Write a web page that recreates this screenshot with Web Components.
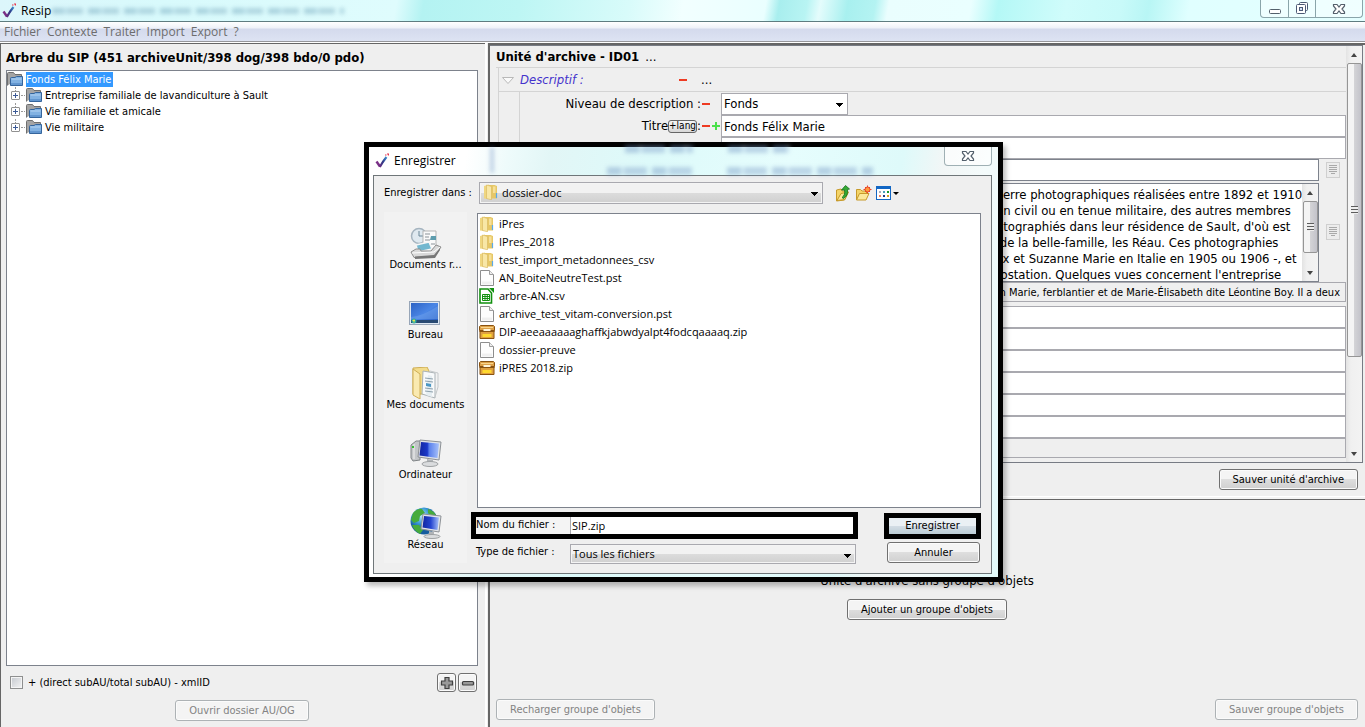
<!DOCTYPE html>
<html lang="fr">
<head>
<meta charset="utf-8">
<title>Resip</title>
<style>
html, body { margin: 0; height: 100%; }
body {
  --ui: "DejaVu Sans Condensed", "DejaVu Sans", sans-serif;
  --sys: "Open Sans", "Noto Sans", sans-serif;
  --face: #efefef;
  --line: #a9a9af;
  --edge: #7d828c;
  font: 11px/16px var(--ui);
  color: #000;
  background: var(--face);
  overflow: hidden;
}
</style>
</head>
<body>
<resip-app></resip-app>

<script>
const RESET = `
*, *::before, *::after { box-sizing: border-box; }
:host { display: block; box-sizing: border-box; }
:host([hidden]) { display: none; }
button, input, select, textarea { font: inherit; color: inherit; margin: 0; border-radius: 0; outline: none; }
svg { display: block; flex: none; }
`;
function define(name, css, html, setup) {
  const template = document.createElement('template');
  template.innerHTML = `<style>${RESET}${css}</style>${html}`;
  customElements.define(name, class extends HTMLElement {
    constructor() {
      super();
      this.attachShadow({ mode: 'open' }).append(template.content.cloneNode(true));
    }
    connectedCallback() { if (setup) setup(this, this.shadowRoot); }
  });
}

/* ---------- icons ---------- */
const ICONS = {
  logo: [14, 16, `<defs><linearGradient id="g" x1="0" y1="1" x2="1" y2="0"><stop offset="0" stop-color="#6a2a80"/><stop offset=".5" stop-color="#2f3a88"/><stop offset="1" stop-color="#3d8fd0"/></linearGradient></defs><path d="M1.500 8.500L5 13.500" fill="none" stroke="#7a2f86" stroke-width="2.400"/><path d="M4.800 14Q7.500 9 11.500 4" fill="none" stroke="url(#g)" stroke-width="2.200"/><path d="M10 2H11.500M12 1H13.500V2.500" fill="none" stroke="#e8344c" stroke-width="1.200"/>`],
  folder: [17, 16, `<path d="M.5 14.500V2.500Q.5 1.500 1.500 1.500H6.500L8 3.500H14.500V6" fill="#a4a4a4" stroke="#6f6f6f"/><path d="M3.500 14.500V7.500Q3.500 6.500 4.500 6.500H8L9.500 5.500H15.500V14.500Z" fill="#82b2e2" stroke="#35659c"/><path d="M4.500 8H14.500" stroke="#b5d4f2"/><path d="M4 13H15" stroke="#6296cf" stroke-width="2"/>`],
  yfolder: [14, 16, `<path d="M0 2L5 .5V15L0 14.500Z" fill="#efd680"/><path d="M5 1H10.500L13 2V14.500H5Z" fill="#e6c766"/><path d="M2.500 1L7.500 2.500V15.800L2.500 14.500Z" fill="#f8e7a6" stroke="#d6b65c" stroke-width=".6"/><path d="M9 2.500H11.500V9H9Z" fill="#f6e09a"/><path d="M12.500 9V14" stroke="#5aa9e8" stroke-width="1.200"/>`],
  page: [14, 16, `<path d="M.5 .5H9.500L13.500 4.500V15.500H.5Z" fill="#fdfdfd" stroke="#8d8d8d"/><path d="M9.500 .5V4.500H13.500" fill="#eee" stroke="#9d9d9d"/><path d="M2 13H12" stroke="#f0f0f0" stroke-width="3"/>`],
  csv: [15, 16, `<path d="M1 1H9L12.500 5V15H1Z" fill="#fff" stroke="#12900f" stroke-width="1.600"/><path d="M10 0H15V5Z" fill="#12900f"/><path d="M3.500 6.500H10.500V12.500H3.500ZM3.500 8.500H10.500M3.500 10.500H10.500M6 6.500V12.500M8.300 6.500V12.500" fill="none" stroke="#12900f"/>`],
  zip: [16, 16, `<path d="M1.500 1.500H14.500L15.500 2.500V6.500H.5V2.500Z" fill="#dda048" stroke="#8a5210"/><path d="M1 6.500H15V14.500H1Z" fill="#dfa040" stroke="#8a5210"/><path d="M2 3.500H14" stroke="#f8d58b"/><path d="M.5 7.500H15.500" stroke="#8a5210"/><rect x="3.500" y="10" width="9" height="3" fill="#ffd92e"/><rect x="4.500" y="5" width="7" height="2" fill="#fff5d8"/>`],
  up: [16, 18, `<path d="M1.500 6L6 5L7 7H12L9.500 16L1.500 17Z" fill="#f4d468" stroke="#c79a2a"/><path d="M2 16.500L6 9.500L13.500 8L10 15.500Z" fill="#fbe89a" stroke="#c79a2a"/><path d="M7 13.500Q10.500 11 9.500 6H6.500L10.500 1.500L14.500 5L12.500 5.500Q13.500 11.500 8.500 14.500Z" fill="#35a935" stroke="#14701a" stroke-width=".8"/>`],
  newfolder: [17, 18, `<path d="M1.500 16V5.500H5.500L7 7H11.500V9" fill="#f4d468" stroke="#c79a2a"/><path d="M1.500 16L4.500 9.500H14L11 16Z" fill="#fbe89a" stroke="#c79a2a"/><circle cx="12.500" cy="5.500" r="2.500" fill="#ff9a3a" stroke="#e8432a"/><path d="M12.500 1.500V3M12.500 8V9.500M8.500 5.500H10M15 5.500H16.500M10 3L11 4M15 3L14 4M10 8L11 7M15 8L14 7" stroke="#e8432a"/>`],
  grid: [24, 16, `<rect x=".5" y="1.500" width="14" height="13" fill="#fff" stroke="#1266c4"/><path d="M1 2.500H14" stroke="#1266c4" stroke-width="3"/><g><rect x="3" y="6" width="2" height="2" fill="#a8b0bc"/><rect x="7" y="6" width="2" height="2" fill="#4aa0b8"/><rect x="11" y="6" width="2" height="2" fill="#1a9a2a"/><rect x="3" y="10" width="2" height="2" fill="#f08060"/><rect x="7" y="10" width="2" height="2" fill="#203880"/><rect x="11" y="10" width="2" height="2" fill="#d8a020"/></g><path d="M17 7H23L20 10Z" fill="#000"/>`],
  recent: [32, 32, `<circle cx="9" cy="9" r="7.500" fill="#dfe9f0" stroke="#a5b4bf" stroke-width="1.500"/><path d="M9 4V9H13" fill="none" stroke="#6b8798"/><path d="M13 4H26V22H13Z" fill="#fafafa" stroke="#b5b5b5"/><path d="M15 7H20M15 10H19M15 13H20M21 17H25" stroke="#8b9298"/><path d="M21 9H26V13H20Z" fill="#5f9dae"/><path d="M6 18L19 15L22 22L8 25Z" fill="#72b7cf" stroke="#f5f5f5" stroke-width="1.500"/><path d="M1 25L6 22H10L11 24H21L26 18L31 20L25 29L4 30.500Z" fill="#d9d9d9" stroke="#8d8d8d"/><path d="M2 26L24 25L30 20" fill="none" stroke="#fff"/><path d="M5 29.500L24 28L30 21V23L25 31L5 32Z" fill="#777"/>`],
  desktop: [32, 32, `<defs><linearGradient id="d" x2="1" y2="1"><stop offset="0" stop-color="#2c62c4"/><stop offset=".5" stop-color="#4a86e6"/><stop offset="1" stop-color="#2358bd"/></linearGradient></defs><rect x=".5" y="4.500" width="30" height="23" fill="#dfe8f2" stroke="#98a6b8"/><rect x="2" y="6" width="27" height="20" fill="url(#d)"/><path d="M2 20Q14 19 29 9V22H2Z" fill="#6fa2ec" opacity=".5"/><rect x="2" y="23" width="27" height="3" fill="#294a72"/><circle cx="5" cy="24" r="2.500" fill="#2ca7a0"/><path d="M3.500 23.500H6M5 22.500V25.500" stroke="#e9e34c"/>`],
  mydocs: [32, 32, `<path d="M3 1L17 0L19 4V27H3Z" fill="#f3dc8b" stroke="#cfae57"/><path d="M13 4L25 6V31L12 27Z" fill="#f8fafb" stroke="#aab2b6"/><path d="M18 8L22 9V30L16 28Z" fill="#e6eef2"/><path d="M15 11L23 12M15 14L23 15M15 21L23 22M15 24L23 25" stroke="#8da0ac"/><path d="M16 16L21 17V20L16 19Z" fill="#4c97c4"/><path d="M3 2L10 7V32L3 28Z" fill="#faeab1" stroke="#cfae57"/><path d="M20 4L28 6V20L25 30" fill="none" stroke="#c4c8ca"/>`],
  computer: [32, 32, `<defs><linearGradient id="c" x2="1"><stop offset="0" stop-color="#1226a0"/><stop offset=".4" stop-color="#1a38c8"/><stop offset=".5" stop-color="#5a80ec"/><stop offset="1" stop-color="#a8c2fa"/></linearGradient></defs><path d="M1 8L6 4H10V23L3 24L1 21Z" fill="#c3c6c8" stroke="#808487"/><path d="M4 7V22" stroke="#f2f2f2"/><rect x="2" y="9" width="2" height="2" fill="#38c030"/><path d="M10 3L31 5L29 23L8 20Z" fill="#dfe3e8" stroke="#8d9196"/><path d="M11 5L29 6.500L27.500 21L9.500 18.500Z" fill="url(#c)"/><path d="M17 22L23 23V26H17Z" fill="#b0b4b8"/><ellipse cx="20" cy="27" rx="8" ry="2.500" fill="#dadcde" stroke="#9fa2a4"/>`],
  network: [32, 32, `<defs><radialGradient id="n" cx=".4" cy=".3"><stop offset="0" stop-color="#b8e8fa"/><stop offset=".6" stop-color="#3a9ad6"/><stop offset="1" stop-color="#155c9e"/></radialGradient><linearGradient id="m" x2="1"><stop offset="0" stop-color="#1226a0"/><stop offset=".5" stop-color="#2444d0"/><stop offset="1" stop-color="#a8c2fa"/></linearGradient></defs><circle cx="14" cy="14" r="13.500" fill="url(#n)"/><path d="M3 6Q8 1 12 2L15 6L10 9L9 14L4 16L1 13ZM2 18L9 18L13 23L10 27Q4 24 2 18ZM18 2Q24 4 26 8L21 9L18 6Z" fill="#46ab3c"/><path d="M13 7L31 9L29 25L11 22Z" fill="#e3e6ea" stroke="#8d9196"/><path d="M14 9L29 10.500L27.500 23L12.500 20.500Z" fill="url(#m)"/><path d="M19 24L24 25V28H19Z" fill="#b0b4b8"/><ellipse cx="22" cy="29.500" rx="8" ry="2" fill="#dadcde" stroke="#9fa2a4"/>`],
  note: [14, 16, `<rect x=".5" y=".5" width="13" height="15" fill="#ececec" stroke="#cfcfcf"/><path d="M3 3.500H11M3 5.500H11M3 7.500H11M3 9.500H11M5 11.500H9" stroke="#a9a9a9"/>`],
  close: [14, 12, `<path d="M1.500 1.500H5L7 4L9 1.500H12.500V3L10 6L12.500 9V10.500H9L7 8L5 10.500H1.500V9L4 6L1.500 3Z" fill="#fff" stroke="#54606c" stroke-width="1.200"/>`],
  min: [14, 12, `<rect x="1.500" y="6.500" width="11" height="4" rx="1" fill="#fff" stroke="#54606c"/>`],
  max: [14, 13, `<rect x="4.500" y=".5" width="8" height="8" rx="1" fill="#fff" stroke="#4c5a75"/><rect x="1.500" y="2.500" width="9" height="9" rx="1" fill="#fff" stroke="#4c5a75"/><rect x="4.500" y="5.500" width="3" height="3" fill="#d4e2f8" stroke="#4c5a75"/>`],
  minus: [10, 4, `<rect x="1" y="1" width="8" height="2" fill="#ee3b22"/>`],
  plus: [10, 10, `<path d="M5 1V9M1 5H9" stroke="#4be04b" stroke-width="2"/>`],
  twist: [14, 10, `<path d="M1.500 2.500H12.500L7 8.500Z" fill="#fafafa" stroke="#b9b9b9"/>`],
  down: [8, 5, `<path d="M0 0H7V1H6V2H5V3H4V4H3V3H2V2H1V1H0Z"/>`],
  boxplus: [14, 14, `<path d="M5 1.500H9V5H12.500V9H9V12.500H5V9H1.500V5H5Z" fill="#999" stroke="#3f3f3f" stroke-width="1.200"/>`],
  boxminus: [14, 14, `<rect x="1.500" y="5.500" width="11" height="3.500" rx="1" fill="#999" stroke="#3f3f3f" stroke-width="1.200"/>`]
};
define('sys-icon', `:host { display: block; flex: none; }`, '', (el, root) => {
  const [w, h, body] = ICONS[el.getAttribute('name')];
  const box = document.createElement('span');
  box.innerHTML = `<svg width="${w}" height="${h}" viewBox="0 0 ${w} ${h}" aria-hidden="true">${body}</svg>`;
  if (!root.querySelector('svg')) root.append(box.firstChild);
});

/* ---------- generic controls ---------- */
define('win-button', `
:host { display: inline-block; }
button {
  display: flex; align-items: center; justify-content: center;
  width: 100%; height: 21px; padding: 0 13px; white-space: nowrap;
  border: 1px solid #707070; border-radius: 3px;
  background: linear-gradient(#f4f4f4 0 50%, #dedede 50%, #d0d0d0);
  box-shadow: inset 0 0 0 1px #fbfbfb;
}
:host([square]) button { width: 19px; height: 19px; padding: 0; }
:host([flat]) button { border: 0; border-radius: 0; background: linear-gradient(#eaf0f4 0 50%, #d3dde5 50%, #bccdd6); box-shadow: none; height: 16px; }
button:disabled { color: #838383; border-color: #adb2b5; background: #f4f4f4; }
`, `<button type="button"><slot></slot></button>`, (el, root) => {
  const b = root.querySelector('button');
  b.disabled = el.hasAttribute('disabled');
  if (el.title) b.setAttribute('aria-label', el.title);
});

define('scroll-bar', `
:host { width: 16px; display: flex; flex-direction: column; background: linear-gradient(90deg, #e3e3e3, #f0f0f0 30%, #f3f3f3); }
i { flex: none; height: 17px; display: grid; place-items: center; }
i::before { content: ""; border: 3px solid transparent; border-top-width: 0; border-bottom: 4px solid #444; }
i:last-child::before { border-bottom-width: 0; border-bottom-color: transparent; border-top: 4px solid #444; }
b { flex: 0 0 var(--thumb); margin: 0 0 0 1px; border: 1px solid #959595; border-radius: 2px; display: grid; place-items: center;
    background: linear-gradient(90deg, #f4f4f4 0 45%, #d3d3d6 50%, #c3c3ca); }
b::before { content: ""; width: 7px; height: 8px; background: repeating-linear-gradient(#5c5c5c 0 1px, #eee 1px 3px); }
span { flex: 1; }
`, `<i></i><b></b><span></span><i></i>`);

define('combo-box', `
:host { position: relative; height: var(--h, 22px); }
select { appearance: none; width: 100%; height: 100%; border: 1px solid var(--line); background: #fff; padding: 0 2px; }
:host([shiny]) select { background: linear-gradient(#f2f2f2 0 50%, #dcdcdc 50%, #d0d0d0); box-shadow: inset 0 0 0 1px #f4f4f4; padding-left: var(--pad, 2px); }
sys-icon { position: absolute; right: 4px; top: 10px; pointer-events: none; }
sys-icon.lead { right: auto; left: 5px; top: 2px; }
`, `<select><option></option></select><sys-icon name="down"></sys-icon>`, (el, root) => {
  root.querySelector('option').textContent = el.getAttribute('value');
  root.querySelector('select').setAttribute('aria-label', el.getAttribute('label'));
  if (el.hasAttribute('icon')) {
    const i = document.createElement('sys-icon');
    i.setAttribute('name', el.getAttribute('icon'));
    i.className = 'lead';
    root.append(i);
  }
});

define('text-field', `
:host { height: 22px; }
input { width: 100%; height: 100%; border: 1px solid var(--line); background: #fff; padding: 0 2px; }
:host([grey]) input { background: var(--face); }
:host([dark]) input { border-color: var(--edge); }
:host([bare]) input { border-width: 0 0 0 1px; padding-left: 1px; }
:host([end]) input { text-align: right; padding-right: 5px; }
`, `<input type="text">`, (el, root) => {
  const i = root.querySelector('input');
  i.value = el.getAttribute('value') || '';
  i.readOnly = el.hasAttribute('grey');
  i.setAttribute('aria-label', el.getAttribute('label') || 'Champ');
});

/* ---------- main window chrome ---------- */
define('title-bar', `
:host { display: flex; align-items: center; height: 22px; flex: none; padding-left: 2px; font: 12px/20px var(--sys); border-bottom: 1px solid #5f7c80; overflow: hidden; position: relative;
  background: linear-gradient(100deg, #dcf6fb 0, #d8fafc 12%, #dffcfd 29%, #b4f3f2 31%, #bdf6f4 38%, #d8fbfa 46%, #f2ffff 50%, #eaffff 56%, #a8eeee 57%, #b8f4f3 59%, #e4fcfc 60%, #a8f0ef 62%, #b4f3f2 64%, #eafefe 65%, #eaffff 71%, #b4f8f6 73%, #d0fcfb 78%, #c8faf9 82%, #b8f6f5 84%, #e0ffff 87%, #e4ffff 100%); }
sys-icon { margin-right: 5px; }
.glow { position: absolute; left: 52px; top: 8px; width: 292px; height: 6px; filter: blur(2px); opacity: .4;
  background: repeating-linear-gradient(90deg, #5f96b0 0 12px, #9fcada 12px 15px, #6f9fb6 15px 31px, transparent 31px 36px); }
h1 { font: inherit; margin: 0; flex: 1; }
nav { display: flex; align-self: flex-start; margin-right: 2px; }
button { height: 18px; margin-left: -1px; border: 1px solid #8aa5aa; border-top: 0; background: #ffffff70; display: grid; place-items: center; padding: 0; width: 28px; }
nav sys-icon { margin: 0; }
button:first-child { border-bottom-left-radius: 4px; width: 29px; }
button:last-child { border-bottom-right-radius: 4px; width: 48px; }
`, `<div class="glow"></div><sys-icon name="logo"></sys-icon><h1>Resip</h1>
<nav><button type="button" aria-label="Réduire"><sys-icon name="min"></sys-icon></button><button type="button" aria-label="Agrandir"><sys-icon name="max"></sys-icon></button><button type="button" aria-label="Fermer"><sys-icon name="close"></sys-icon></button></nav>`);

define('menu-bar', `
:host { display: flex; gap: 6px; flex: none; height: 20px; padding-left: 4px; font: 12px/20px var(--sys); border-bottom: 1px solid #97979b; background: linear-gradient(#fff 0, #eef1f8 6px, #d4daed 7px, #dde3f3 100%); }
a { color: #6d6d6d; text-decoration: none; }
`, `<a href="#fichier">Fichier</a><a href="#contexte">Contexte</a><a href="#traiter">Traiter</a><a href="#import">Import</a><a href="#export">Export</a><a href="#aide">?</a>`);

/* ---------- tree ---------- */
define('tree-item', `
:host { display: flex; height: 16px; align-items: center; padding-left: 4px; position: relative; }
:host([root]) { padding-left: 0; }
:host(:not([root]))::before { content: ""; position: absolute; left: 8px; top: 0; height: 4px; border-left: 1px dotted #999; }
i { flex: none; width: 9px; height: 9px; border: 1px solid #919191; border-radius: 1px; margin-right: 5px;
    background: linear-gradient(#3c5a96, #3c5a96) 50% 50% / 5px 1px no-repeat, linear-gradient(#3c5a96, #3c5a96) 50% 50% / 1px 5px no-repeat, #fff; }
:host([root]) i { display: none; }
u { flex: none; width: 4px; margin: 0 1px 0 -4px; border-top: 1px dotted #999; }
:host([root]) u { display: none; }
sys-icon { margin-right: 2px; }
span { line-height: 15px; padding: 0 2px 0 0; white-space: nowrap; }
:host([root]) span { background: #3399ff; color: #fff; }
`, `<i></i><u></u><sys-icon name="folder"></sys-icon><span><slot></slot></span>`);

define('tree-panel', `
:host { display: flex; flex-direction: column; padding: 0 7px 6px 5px; border: 1px solid #666; border-width: 1px 0 0 1px; margin-right: 3px; box-shadow: 2px 0 #fff; }
h2 { margin: 0; height: 26px; font: bold 13px/28px var(--ui); white-space: nowrap; }
.tree { flex: 1; border: 1px solid var(--edge); background: #fff; }
.opts { display: flex; align-items: center; gap: 2px; height: 33px; padding: 0 1px 0 4px; }
label { flex: 1; display: flex; align-items: center; gap: 5px; }
input { appearance: none; width: 13px; height: 13px; border: 1px solid #8e8f8f; box-shadow: inset 0 0 0 1px #f4f4f4; background: linear-gradient(135deg, #c4c8ce, #f4f4f4); }
win-button { display: block; }
.foot { display: flex; justify-content: center; padding-top: 1px; }
`, `<h2>Arbre du SIP (451 archiveUnit/398 dog/398 bdo/0 pdo)</h2>
<div class="tree"><tree-item root>Fonds Félix Marie</tree-item><tree-item>Entreprise familiale de lavandiculture à Sault</tree-item><tree-item>Vie familiale et amicale</tree-item><tree-item>Vie militaire</tree-item></div>
<div class="opts"><label><input type="checkbox">+ (direct subAU/total subAU) - xmlID</label><win-button square title="Déplier"><sys-icon name="boxplus"></sys-icon></win-button><win-button square title="Replier"><sys-icon name="boxminus"></sys-icon></win-button></div>
<div class="foot"><win-button disabled>Ouvrir dossier AU/OG</win-button></div>`);

/* ---------- archive unit form ---------- */
define('form-row', `
:host { display: grid; grid-template-columns: 201px 1fr; height: 22px; }
.label { display: flex; align-items: center; justify-content: flex-end; white-space: nowrap; }
.field { display: flex; min-width: 0; }
::slotted([slot=field]) { flex: 1; }
::slotted(combo-box) { flex: 0 0 127px !important; }
`, `<div class="label"><slot name="label"></slot></div><div class="field"><slot name="field"></slot></div>`);

define('unit-panel', `
:host { display: flex; flex-direction: column; padding-bottom: 9px; font: 13px/16px var(--ui); }
.scroll { display: flex; flex: 1; border: 1px solid #777b84; border-left: 0; border-width: 1px 1px 1px 0; margin-right: 2px; }
.body { flex: 1; min-width: 0; padding: 0 0 3px 8px; }
scroll-bar { --thumb: 294px; }
header { height: 22px; display: flex; align-items: center; gap: 6px; margin-left: -2px; border-bottom: 1px solid #d4d4d4; }
h2 { margin: 0; font: bold 13px/16px var(--ui); }
.group { border-left: 1px solid #d4d4d4; }
.sub { height: 24px; display: flex; align-items: center; padding-left: 2px; border-bottom: 1px solid #d4d4d4; }
.sub em { color: #4433cc; width: 163px; padding-left: 5px; }
.sub sys-icon + span { margin-left: 13px; }
.rows { border-left: 1px solid #d4d4d4; margin-left: 20px; padding-top: 1px; }
.tag { border: 1px solid #666; border-radius: 3px; font-size: 10px; line-height: 10px; padding: 0; background: linear-gradient(#f6f6f6, #d8d8d8); height: 13px; }
.pad { width: 10px; }
.with { display: flex; gap: 7px; padding-right: 6px; align-items: center; }
.with > :first-child { flex: 1; }
form-row.high { height: 101px; padding-top: 1px; }
.area { display: flex; align-self: stretch; margin-top: 1px; border: 1px solid var(--edge); background: #fff; min-width: 0; }
.area scroll-bar { --thumb: 52px; }
textarea { flex: 1; min-width: 0; border: 0; resize: none; overflow: hidden; background: transparent; padding: 3px 0 0 274px; white-space: pre; line-height: 16px; }
.small { font-size: 11px; height: 20px; margin-bottom: 4px; }
.small text-field, .end text-field, .end { height: 20px; }
.foot { display: flex; justify-content: flex-end; padding: 6px 7px 0; font-size: 11px; }
`, `<div class="scroll"><div class="body">
<header><h2>Unité d'archive - ID01</h2><span>...</span></header>
<div class="group"><div class="sub"><sys-icon name="twist"></sys-icon><em>Descriptif :</em><sys-icon name="minus"></sys-icon><span>...</span></div>
<div class="rows">
<form-row><span slot="label">Niveau de description :</span><sys-icon slot="label" name="minus"></sys-icon><span slot="label" class="pad"></span><combo-box slot="field" value="Fonds" label="Niveau de description"></combo-box></form-row>
<form-row><span slot="label">Titre</span><button slot="label" class="tag" type="button">+lang</button><span slot="label">:</span><sys-icon slot="label" name="minus"></sys-icon><sys-icon slot="label" name="plus"></sys-icon><text-field slot="field" value="Fonds Félix Marie" label="Titre"></text-field></form-row>
<form-row><text-field slot="field"></text-field></form-row>
<form-row><div slot="field" class="with"><text-field dark></text-field><sys-icon name="note"></sys-icon></div></form-row>
<form-row class="high"><div slot="field" class="with"><div class="area"><textarea aria-label="Description">verre photographiques réalisées entre 1892 et 1910
en civil ou en tenue militaire, des autres membres
otographiés dans leur résidence de Sault, d'où est
 de la belle-famille, les Réau. Ces photographies
lix et Suzanne Marie en Italie en 1905 ou 1906 -, et
rostation. Quelques vues concernent l'entreprise</textarea><scroll-bar></scroll-bar></div><sys-icon name="note"></sys-icon></div></form-row>
<form-row class="small"><text-field slot="field" end grey value="ph Marie, ferblantier et de Marie-Élisabeth dite Léontine Boy. Il a deux" label="Historique"></text-field></form-row>
<form-row><text-field slot="field"></text-field></form-row>
<form-row><text-field slot="field"></text-field></form-row>
<form-row><text-field slot="field"></text-field></form-row>
<form-row><text-field slot="field"></text-field></form-row>
<form-row><text-field slot="field"></text-field></form-row>
<form-row><text-field slot="field"></text-field></form-row>
<form-row class="end"><text-field slot="field" grey></text-field></form-row>
</div></div></div><scroll-bar></scroll-bar></div>
<div class="foot"><win-button>Sauver unité d'archive</win-button></div>`);

define('object-panel', `
:host { display: flex; flex-direction: column; border-top: 1px solid #666; box-shadow: 0 -2px #f4f4f4, 0 -3px #fff; padding: 0 7px 7px 6px; }
.none { flex: 1; display: flex; flex-direction: column; align-items: center; justify-content: center; gap: 10px; padding-bottom: 6px; }
p { margin: 0; font-size: 13px; }
.foot { display: flex; justify-content: space-between; }
`, `<div class="none"><p>Unité d'archive sans groupe d'objets</p><win-button>Ajouter un groupe d'objets</win-button></div>
<div class="foot"><win-button disabled>Recharger groupe d'objets</win-button><win-button disabled>Sauver groupe d'objets</win-button></div>`);

/* ---------- save dialog ---------- */
define('place-item', `
:host { display: flex; flex-direction: column; align-items: center; height: 70px; padding-top: 15px; white-space: nowrap; line-height: 12px; }
a { display: flex; flex-direction: column; align-items: center; color: inherit; text-decoration: none; }
`, `<a href="#"><slot></slot></a>`, (el, root) => {
  const icon = document.createElement('sys-icon');
  icon.setAttribute('name', el.getAttribute('icon'));
  root.querySelector('a').prepend(icon);
});

define('file-item', `
:host { display: flex; align-items: center; height: 18px; white-space: nowrap; }
.ico { width: 20px; padding-left: 1px; }
.ico.wide { padding-left: 0; }
`, `<div class="ico"></div><slot></slot>`, (el, root) => {
  const name = el.getAttribute('icon');
  const ico = root.querySelector('.ico');
  ico.innerHTML = `<sys-icon name="${name}"></sys-icon>`;
  ico.classList.toggle('wide', name === 'zip' || name === 'csv');
});

define('save-dialog', `
:host { position: absolute; inset: 0; display: grid; place-items: center; padding: 0 0 3px 2px; pointer-events: none; }
.win { pointer-events: auto; width: 639px; height: 440px; border: 5px solid #000; padding: 0 6px 3px 4px; display: flex; flex-direction: column; position: relative;
  box-shadow: 3px 4px 5px #0004;
  background: linear-gradient(100deg, #fff 0 14%, #eefbfb 20%, #e2f6f6 26%, #ddfafa 40%, #e6fdfd 60%, #defafa 76%, #f2f6f6 82%, #f4fbfb 88%, #e2fafa 100%); }
header { display: flex; height: 28px; align-items: center; font: 12px/20px var(--sys); padding-left: 2px; position: relative; }
header h2 { font: inherit; margin: 0 0 0 5px; flex: 1; }
.ghost { position: absolute; filter: blur(2px); opacity: .4; height: 8px;
  background: repeating-linear-gradient(90deg, #6d90c0 0 14px, #c4dcf0 14px 17px, #7d9cc8 17px 40px, transparent 40px 45px); }
.g0 { left: 117px; top: 0; width: 4px; height: 26px; }
.g1 { left: 252px; top: -2px; width: 68px; }
.g2 { left: 234px; top: 20px; width: 90px; }
.g3 { left: 355px; top: -2px; width: 62px; }
.g4 { left: 354px; top: 20px; width: 146px; }
.close { align-self: flex-start; width: 48px; height: 19px; border: 1px solid #9fb0b4; border-top: 0; border-radius: 0 0 4px 4px; background: #ffffffa0; display: grid; place-items: center; padding: 0; position: relative; }
.pane { flex: 1; border: 1px solid #6f7679; background: var(--face); display: grid; grid-template: 33px auto / 95px 1fr; align-content: start; padding: 0 10px; }
.top { grid-column: 1 / -1; display: flex; align-items: center; height: 33px; }
.top label { width: 95px; }
.top combo-box { flex: 0 0 344px; --pad: 22px; font: 11px/16px var(--sys); }
.tools { display: flex; gap: 4px; margin-left: 12px; align-items: center; }
.places { background: #f2f2f2; margin-right: 12px; height: 351px; margin-top: 3px; }
.main { display: flex; flex-direction: column; min-width: 0; }
.files { height: 295px; margin: 4px 0 0 -2px; border: 1px solid var(--edge); background: #fff; padding: 1px; font: 11px/16px var(--sys); }
.name { display: grid; grid-template-columns: 387px 97px; justify-content: space-between; margin: 4px 0 0 -8px; align-items: start; }
.nf { border: 5px solid #000; height: 27px; display: grid; grid-template-columns: 94px 1fr; background: linear-gradient(90deg, #f4f4f4 94px, #fff 94px); }
.nf text-field { height: 17px; font: 11px/16px var(--sys); }
.ok { border: 5px solid #000; margin-top: 1px; }
.ok win-button { display: block; }
.type { display: grid; grid-template-columns: 94px 286px 1fr; margin: 3px 1px 0 -3px; }
.type label { padding-top: 2px; }
.type combo-box { --h: 20px; margin-top: 2px; font: 11px/16px var(--sys); }
.type win-button { width: 93px; justify-self: end; }
`, `<section class="win" role="dialog" aria-label="Enregistrer"><header><i class="ghost g0"></i><i class="ghost g1"></i><i class="ghost g2"></i><i class="ghost g3"></i><i class="ghost g4"></i><sys-icon name="logo"></sys-icon><h2>Enregistrer</h2><button type="button" class="close" aria-label="Fermer"><sys-icon name="close"></sys-icon></button></header>
<div class="pane">
<div class="top"><label>Enregistrer dans :</label><combo-box shiny icon="yfolder" value="dossier-doc" label="Enregistrer dans"></combo-box><div class="tools"><sys-icon name="up"></sys-icon><sys-icon name="newfolder"></sys-icon><sys-icon name="grid"></sys-icon></div></div>
<div class="places"><place-item icon="recent">Documents r...</place-item><place-item icon="desktop">Bureau</place-item><place-item icon="mydocs">Mes documents</place-item><place-item icon="computer">Ordinateur</place-item><place-item icon="network">Réseau</place-item></div>
<div class="main"><div class="files"><file-item icon="yfolder">iPres</file-item><file-item icon="yfolder">IPres_2018</file-item><file-item icon="yfolder">test_import_metadonnees_csv</file-item><file-item icon="page">AN_BoiteNeutreTest.pst</file-item><file-item icon="csv">arbre-AN.csv</file-item><file-item icon="page">archive_test_vitam-conversion.pst</file-item><file-item icon="zip">DIP-aeeaaaaaaghaffkjabwdyalpt4fodcqaaaaq.zip</file-item><file-item icon="page">dossier-preuve</file-item><file-item icon="zip">iPRES 2018.zip</file-item></div>
<div class="name"><div class="nf"><label>Nom du fichier :</label><text-field bare value="SIP.zip" label="Nom du fichier"></text-field></div><div class="ok"><win-button flat>Enregistrer</win-button></div></div>
<div class="type"><label>Type de fichier :</label><combo-box shiny value="Tous les fichiers" label="Type de fichier"></combo-box><win-button>Annuler</win-button></div>
</div></div></section>`);

define('resip-app', `
:host { display: flex; flex-direction: column; height: 100vh; min-height: 700px; position: relative; background: #fff; }
main { flex: 1; min-height: 0; display: grid; grid-template-columns: 488px 1fr; margin-top: 1px; background: var(--face); }
.right { display: grid; grid-template-rows: 454px 1fr; min-width: 0; border: solid #666; border-width: 2px 0 0 2px; }
`, `<title-bar></title-bar><menu-bar></menu-bar><main><tree-panel></tree-panel><div class="right"><unit-panel></unit-panel><object-panel></object-panel></div></main><save-dialog></save-dialog>`);
</script>
</body>
</html>
